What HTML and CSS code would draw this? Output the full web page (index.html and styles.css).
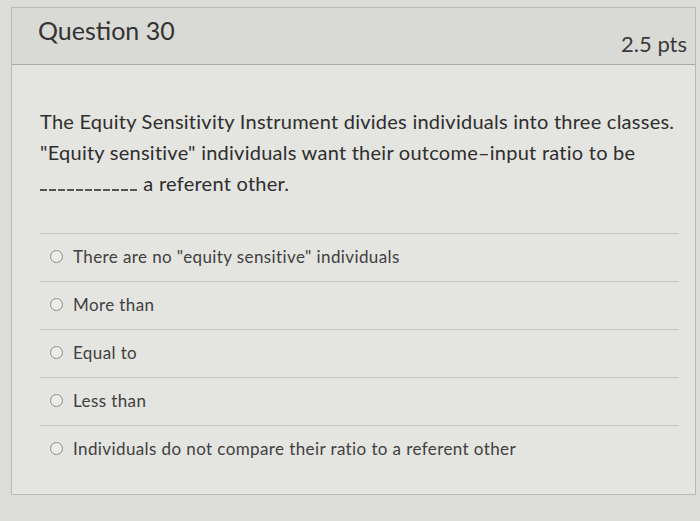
FILE: index.html
```html
<!DOCTYPE html>
<html>
<head>
<meta charset="utf-8">
<link rel="stylesheet" href="styles.css">
</head>
<body>
<div class="page">
  <div class="card">
    <div class="header">
      <h2 class="title">Question 30</h2>
      <span class="pts">2.5 pts</span>
    </div>
    <div class="body">
      <p class="question">The Equity Sensitivity Instrument divides individuals into three classes.<br>"Equity sensitive" individuals want their outcome–input ratio to be<br><span class="blank"></span> a referent other.</p>
      <div class="answers">
        <label class="answer"><span class="radio"></span>There are no "equity sensitive" individuals</label>
        <label class="answer"><span class="radio"></span>More than</label>
        <label class="answer"><span class="radio"></span>Equal to</label>
        <label class="answer"><span class="radio"></span>Less than</label>
        <label class="answer last"><span class="radio"></span>Individuals do not compare their ratio to a referent other</label>
      </div>
    </div>
  </div>
</div>
</body>
</html>
```

FILE: styles.css
```css
html, body {
  margin: 0;
  padding: 0;
}
body {
  background: #dcdcd8;
  font-family: Lato, "Open Sans", sans-serif;
  width: 700px;
  height: 521px;
  overflow: hidden;
}
.page {
  padding: 7px 4px 0 11px;
}
.card {
  background: #e4e4e0;
  border: 1px solid #b9b9b5;
  height: 488px;
  box-sizing: border-box;
}
.header {
  display: flex;
  justify-content: space-between;
  align-items: flex-start;
  background: #d9d9d5;
  height: 57px;
  box-sizing: border-box;
  padding: 7px 8px 0 26px;
  border-bottom: 1px solid #a9a9a5;
}
.title {
  margin: 0;
  font-size: 25px;
  font-weight: 400;
  line-height: 30px;
  color: #333;
}
.pts {
  margin-top: 16px;
  font-size: 22px;
  line-height: 26px;
  color: #3a3a3a;
}
.body {
  padding: 41px 16px 0 28px;
}
.question {
  margin: 0;
  font-size: 20px;
  line-height: 31px;
  color: #2e2e2e;
  letter-spacing: 0.25px;
  white-space: nowrap;
}
.blank {
  display: inline-block;
  width: 97px;
  height: 2px;
  background: repeating-linear-gradient(90deg, #555 0 7px, transparent 7px 9px);
  margin-right: 1px;
}
.answers {
  margin-top: 34px;
}
.answer {
  display: flex;
  align-items: center;
  height: 48px;
  box-sizing: border-box;
  border-top: 1px solid #c4c4c0;
  padding: 0 0 3px 10px;
  font-size: 17px;
  letter-spacing: 0.4px;
  color: #404040;
}
.radio {
  width: 11px;
  height: 11px;
  border: 1.5px solid #8a8a8a;
  border-radius: 50%;
  background: #ecece9;
  margin-right: 10px;
  flex: none;
}
```
